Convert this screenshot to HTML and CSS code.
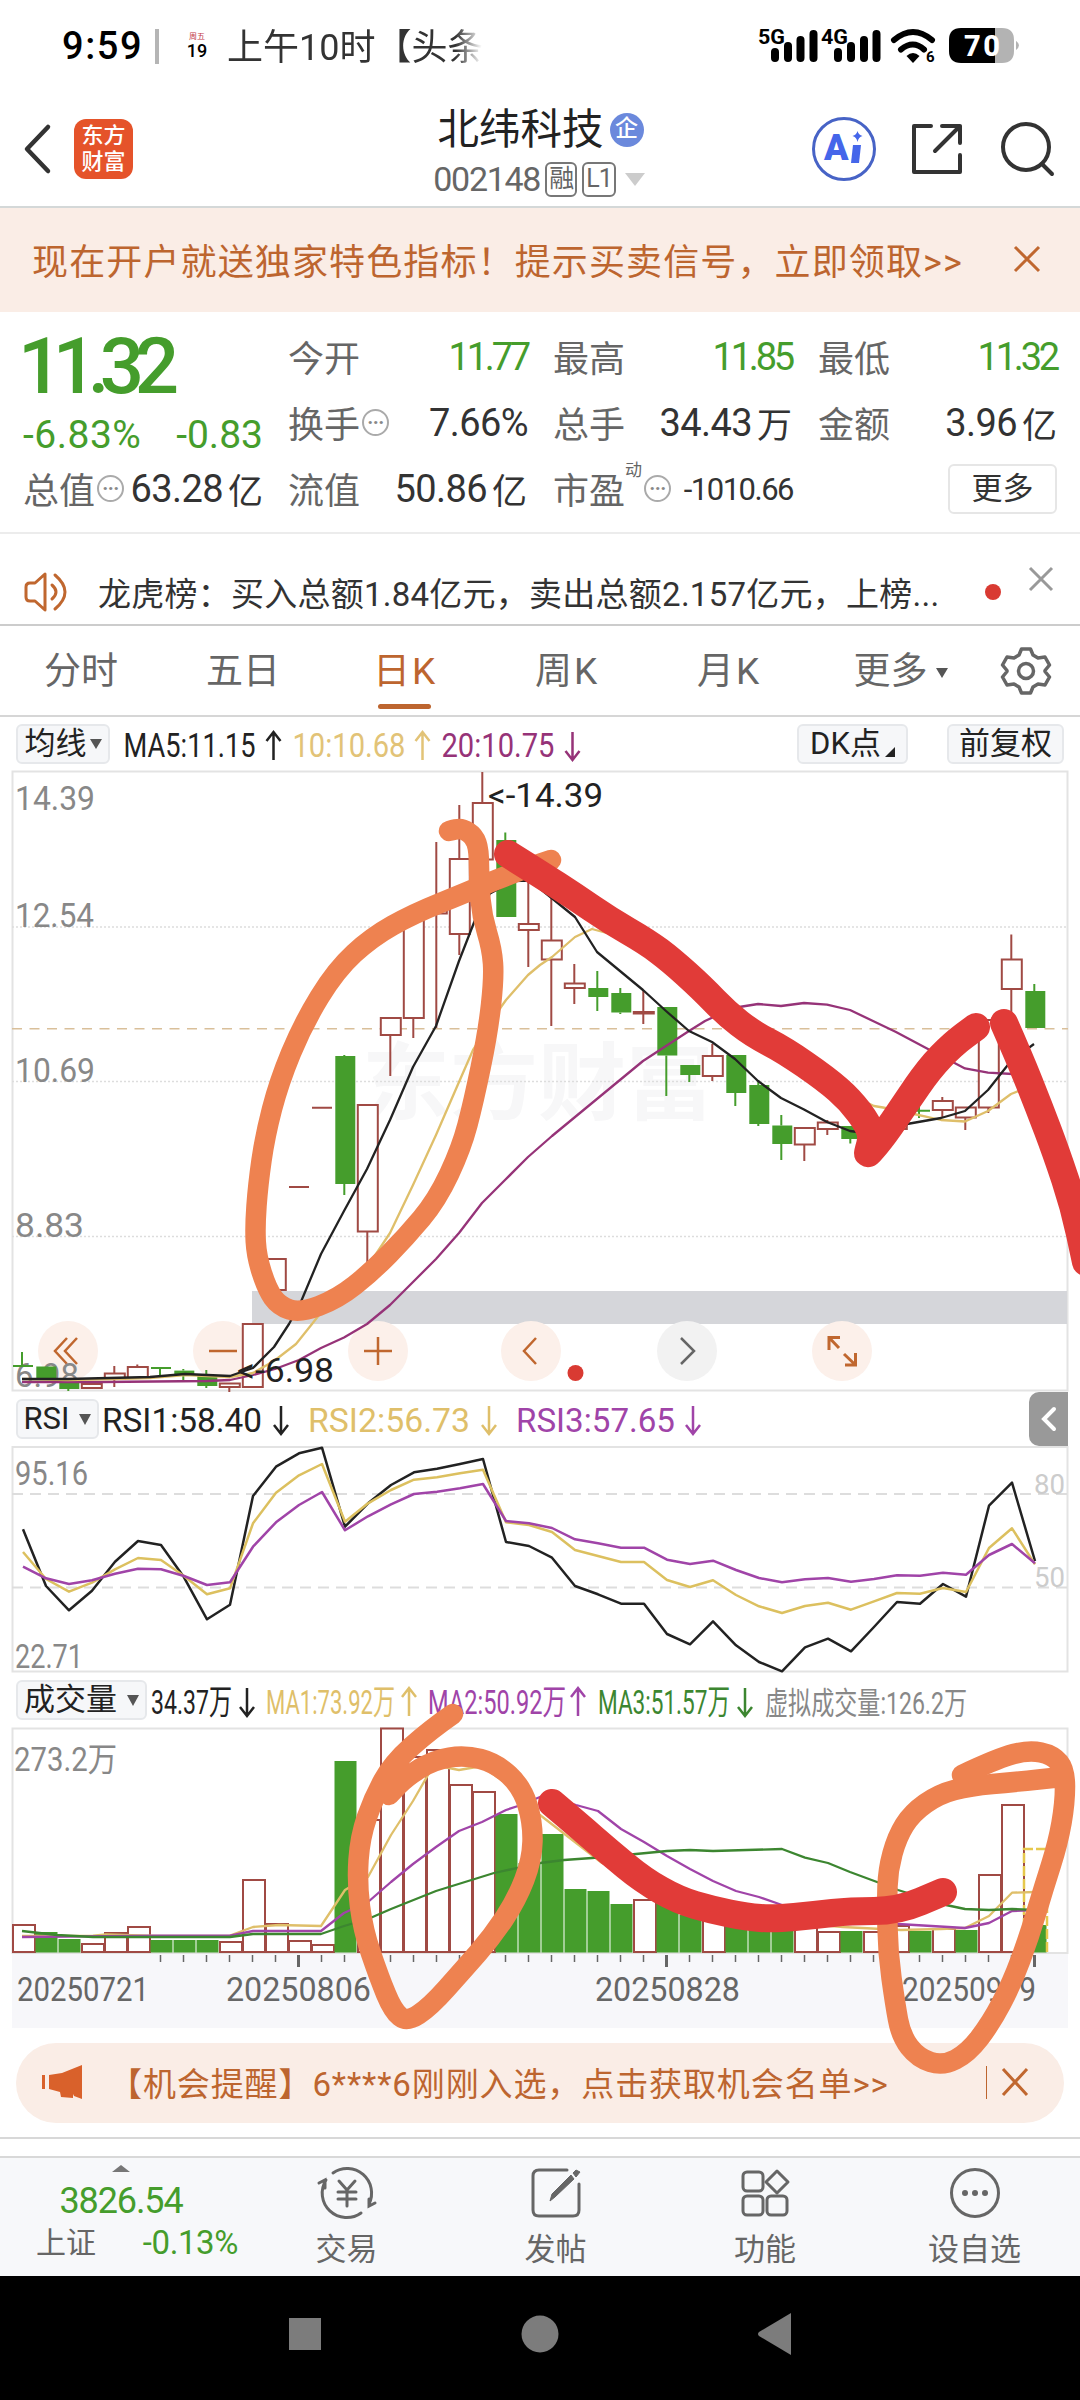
FILE: index.html
```html
<!DOCTYPE html>
<html lang="zh-CN">
<head>
<meta charset="utf-8">
<title>北纬科技 002148</title>
<link rel="stylesheet" href="styles.css">
</head>
<body>
<div class="screen">
  <header class="status">
    <div class="status-left">
      <span class="clock">9:59</span><i class="status-bar"></i>
      <span class="cal"><small>周五</small><b>19</b></span>
      <span class="status-note">上午10时【头条</span>
    </div>
    <svg class="status-icons" width="270" height="46" viewBox="750 24 270 46">
      <g font-family="Roboto" font-weight="700" font-size="21"><text x="758" y="44" textLength="27" lengthAdjust="spacingAndGlyphs">5G</text><text x="821" y="44" textLength="27" lengthAdjust="spacingAndGlyphs">4G</text></g>
      <path d="M775 52v6M788 46v12M800.500 40v18M813.500 34v24M838 52v6M851 46v12M864 40v18M876.500 34v24" stroke="#000" stroke-width="8" stroke-linecap="round"/>
      <path d="M894 40q19-16 38 0M901 49.500q12-10 23 0" fill="none" stroke="#000" stroke-width="6" stroke-linecap="round"/>
      <path d="M906.500 56q6.500-6 13 0l-6.500 7z"/>
      <text x="926" y="62" font-family="Roboto" font-weight="700" font-size="15">6</text>
      <path d="M961 28h34v35h-34q-12 0-12-12V40q0-12 12-12z"/>
      <path d="M995 28h7q12 0 12 12v11q0 12-12 12h-7zM1016 41q6 4 0 9z" fill="#b3b3b3"/>
      <text x="964" y="56" font-family="Roboto" font-weight="800" font-size="29" fill="#fff" textLength="36">70</text>
    </svg>
  </header>

  <nav class="topbar">
    <div class="top-left">
      <svg width="30" height="50" viewBox="0 0 30 50"><path d="M25 3L4 25l21 22" class="ink w5"/></svg>
      <div class="logo"><span>东方</span><span>财富</span></div>
    </div>
    <div class="title">
      <h1>北纬科技<em>企</em></h1>
      <p>002148<span class="tag">融</span><span class="tag">L1</span><i class="tri"></i></p>
    </div>
    <div class="top-right">
      <svg width="66" height="66" viewBox="0 0 66 66"><circle cx="33" cy="33" r="30.500" fill="none" stroke="#4763c6" stroke-width="3"/><text x="13" y="44" class="ai">A</text><path d="M42 29h8l-2 18h-8z" fill="#4566ea"/><path d="M46.500 15q1 4 5 5-4 1-5 6-1-5-5-6 4-1 5-5z" fill="#4566ea"/></svg>
      <svg width="54" height="54" viewBox="0 0 54 54"><path d="M21 4H4v46h46V33M32 4h18v17M50 4L25 29" class="ink w4"/></svg>
      <svg width="54" height="54" viewBox="0 0 54 54"><circle cx="26" cy="25" r="23" class="ink w4"/><path d="M42 42l10 10" class="ink w4"/></svg>
    </div>
  </nav>

  <section class="banner"><span>现在开户就送独家特色指标！提示买卖信号，立即领取&gt;&gt;</span>
    <svg width="28" height="28" viewBox="0 0 28 28"><path d="M2 2l24 24M26 2L2 26" class="cross"/></svg>
  </section>

  <section class="quote">
    <div class="price"><strong>11.32</strong><p><span>-6.83%</span><span>-0.83</span></p></div>
    <div class="cell"><label>今开</label><b class="g">11.77</b></div>
    <div class="cell"><label>最高</label><b class="g">11.85</b></div>
    <div class="cell"><label>最低</label><b class="g">11.32</b></div>
    <div class="cell"><label>换手<i class="info">···</i></label><b>7.66%</b></div>
    <div class="cell"><label>总手</label><b>34.43<u>万</u></b></div>
    <div class="cell"><label>金额</label><b>3.96<u>亿</u></b></div>
    <div class="cell"><label>总值<i class="info">···</i></label><b>63.28<u>亿</u></b></div>
    <div class="cell"><label>流值</label><b>50.86<u>亿</u></b></div>
    <div class="cell"><label>市盈<sup>动</sup><i class="info">···</i></label><b class="small">-1010.66</b></div>
    <div class="cell end"><button class="more">更多</button></div>
  </section>

  <section class="news">
    <svg width="48" height="40" viewBox="0 0 48 40"><path d="M21 2v36L11 29H6q-4 0-4-4V15q0-4 4-4h5zM28 13q8 7 0 14M31 3q20 17 0 34" fill="none" stroke="#c0672f" stroke-width="3" stroke-linejoin="round" stroke-linecap="round"/></svg>
    <span class="news-text">龙虎榜：买入总额1.84亿元，卖出总额2.157亿元，上榜...</span>
    <i class="dot"></i>
    <svg class="news-close" width="26" height="26" viewBox="0 0 26 26"><path d="M2 2l22 22M24 2L2 24" stroke="#999" stroke-width="3"/></svg>
  </section>

  <nav class="tabs">
    <a>分时</a><a>五日</a><a class="on k">日K</a><a class="k">周K</a><a class="k">月K</a><a>更多<i class="tri dark"></i></a>
    <svg width="50" height="50" viewBox="-25 -25 50 50"><path d="M-4.500-22h9l2.500 6 5 3 7-1 4.500 8-4.500 5.500v1l4.500 5.500-4.500 8-7-1-5 3-2.500 6h-9l-2.500-6-5-3-7 1-4.500-8 4.500-5.500v-1l-4.500-5.500 4.500-8 7 1 5-3z" class="gear"/><circle r="7.500" class="gear"/></svg>
  </nav>

  <div class="legend ma">
    <button class="chip c1">均线<i class="tri dark"></i></button>
    <svg class="grow" height="54" viewBox="114 717 680 54" id="legend-ma"></svg>
    <button class="chip c2">DK点<i class="corner"></i></button>
    <button class="chip c3">前复权</button>
  </div>
  <svg class="panel" height="620" viewBox="0 771 1080 620" id="kline"></svg>

  <div class="legend rsi">
    <button class="chip c4">RSI<i class="tri dark"></i></button>
    <svg class="grow" height="56" viewBox="101 1391 900 56" id="legend-rsi"></svg>
    <span class="drawer"><svg width="20" height="30" viewBox="0 0 20 30"><path d="M15 5L5 15l10 10" fill="none" stroke="#fff" stroke-width="4" stroke-linecap="round"/></svg></span>
  </div>
  <svg class="panel" height="225" viewBox="0 1447 1080 225" id="rsi"></svg>

  <div class="legend vol">
    <button class="chip c5">成交量<i class="tri dark"></i></button>
    <svg class="grow" height="56" viewBox="149 1672 900 56" id="legend-vol"></svg>
  </div>
  <svg class="panel" height="300" viewBox="0 1728 1080 300" id="volume"></svg>

  <section class="promo">
    <svg width="42" height="36" viewBox="0 0 42 36"><path d="M1 11h3v14H1zM8 11l13-2L41 1v34l-8-3-1-2v4l-12-1-1-5-11-3z" fill="#d9612b"/></svg>
    <span>【机会提醒】6****6刚刚入选，点击获取机会名单&gt;&gt;</span>
    <i class="divider"></i>
    <svg width="28" height="30" viewBox="0 0 28 30"><path d="M2 2l24 26M26 2L2 28" class="cross"/></svg>
  </section>
  <div class="strip"></div>

  <nav class="bottom">
    <div class="index"><i class="tri up"></i><b>3826.54</b><p><span>上证</span><em>-0.13%</em></p></div>
    <a><svg width="56" height="52" viewBox="-28 -26 56 52"><path d="M-14-20A24.500 24.500 0 0 1 22 11M14 20A24.500 24.500 0 0 1-21-13M-28-10l6-3v8M28 10l-6 3v-7" class="line"/><path d="M-8-12L0-3l8-9M0-3v16M-9-1H9M-9 6H9" class="line"/></svg>交易</a>
    <a><svg width="56" height="52" viewBox="-28 -26 56 52"><path d="M11-23h-28q-6 0-6 6v34q0 6 6 6h34q6 0 6-6V-9" class="line"/><path d="M-6 8l2-7L15-18l3 4L-1 4zM17-20l3-3 4 2-4 5z" fill="#666" stroke="#666"/></svg>发帖</a>
    <a><svg width="56" height="52" viewBox="-28 -26 56 52"><rect x="-22" y="-21" width="20" height="19" rx="4" class="line"/><rect x="-22" y="3" width="20" height="19" rx="4" class="line"/><rect x="2" y="3" width="20" height="19" rx="4" class="line"/><path d="M12-22l11 11L12 0 1-11z" class="line" stroke-linejoin="round"/></svg>功能</a>
    <a><svg width="56" height="52" viewBox="-28 -26 56 52"><circle r="23.500" class="line"/><g fill="#666"><circle cx="-10" r="3"/><circle r="3"/><circle cx="10" r="3"/></g></svg>设自选</a>
  </nav>
  <footer class="sysnav">
    <svg width="32" height="32"><rect width="32" height="32" fill="#7c7c7c"/></svg>
    <svg width="38" height="38"><circle cx="19" cy="19" r="18.500" fill="#7c7c7c"/></svg>
    <svg width="34" height="42"><path d="M34 0v42L2 23q-2-2 0-4z" fill="#7c7c7c"/></svg>
  </footer>

  <svg class="marks" width="1080" height="2400" viewBox="0 0 1080 2400">
    <g class="orange" id="orange"></g>
    <g class="red" id="red"></g>
  </svg>
</div>
<script src="chart.js"></script>
</body>
</html>
```
FILE: styles.css
```css
* { box-sizing: border-box; }
body { margin: 0; background: #fff; }
.screen { position: relative; width: 1080px; height: 2400px; overflow: hidden; background: #fff; color: #333;
  font-family: Roboto, "Noto Sans CJK SC", sans-serif; text-spacing-trim: space-all; display: flex; flex-direction: column; }
.screen > * { flex: none; }
.screen svg { display: block; overflow: visible; }
i, em { font-style: normal; }
button { font: inherit; color: inherit; padding: 0; margin: 0; }

.status { height: 95px; display: flex; justify-content: space-between; padding: 0 60px 0 62px; color: #000; }
.status-left { display: flex; align-items: center; height: 92px; }
.clock { font-size: 38px; font-weight: 500; letter-spacing: 1.6px; width: 93px; }
.status-bar { width: 4px; height: 35px; background: #b5b5b5; margin-right: 27px; }
.cal { display: flex; flex-direction: column; align-items: center; width: 22px; line-height: 1; }
.cal small { font-size: 8px; color: #c23a4a; }
.cal b { font-size: 18px; font-weight: 500; margin-top: 1px; }
.status-note { width: 260px; margin: -4px 0 0 19px; font-size: 36px; font-weight: 400; letter-spacing: 0; white-space: nowrap; overflow: hidden; color: #333;
  -webkit-mask-image: linear-gradient(90deg, #000 88%, transparent 98%); mask-image: linear-gradient(90deg, #000 88%, transparent 98%); }
.status-icons { margin-top: 24px; }

.topbar { height: 113px; border-bottom: 2px solid #d4d8d8; display: grid; grid-template-columns: 1fr 260px 1fr; }
.top-left { display: flex; align-items: center; gap: 21px; padding-left: 23px; margin-top: -4px; }
.logo { width: 59px; height: 60px; border-radius: 12px; background: #e5532a; color: #fff; font-size: 22px; font-weight: 500; line-height: 26px;
  display: flex; flex-direction: column; align-items: center; justify-content: center; }
.title { text-align: center; }
.title h1 { margin: 9px 0 0 1px; font-size: 41.500px; font-weight: 400; line-height: 52px; color: #222; display: flex; align-items: center; justify-content: center; gap: 6px; white-space: nowrap; }
.title em { width: 34px; height: 34px; border-radius: 50%; background: #6b89dc; color: #fff; font-size: 23px; line-height: 32px; font-weight: 500; }
.title p { margin: 3px 0 0 -2px; display: flex; align-items: center; justify-content: center; font-size: 34px; line-height: 40px; color: #666; letter-spacing: -1.300px; }
.tag { height: 35px; min-width: 31px; border: 2px solid #777; border-radius: 6px; font-size: 25px; line-height: 30px; margin-left: 5px; padding: 0 2px; letter-spacing: -1px; }
.tri { display: inline-block; border: 10px solid transparent; border-top: 13px solid #ccc; border-bottom: 0; margin-left: 9px; }
.top-right { display: flex; align-items: center; justify-content: flex-end; gap: 31px; padding-right: 26px; margin-top: -4px; }
.top-right svg:first-child { margin-right: 2px; }
.top-right svg:last-child { margin-left: 5px; }
.ink { fill: none; stroke: #333; stroke-linejoin: round; stroke-linecap: round; }
.w4 { stroke-width: 4; } .w5 { stroke-width: 4.500px; }
.ai { font: 900 36px Roboto; fill: #4566ea; }

.banner { height: 104px; background: #faede6; color: #bd652f; font-size: 36px; letter-spacing: 1.130px; display: flex; align-items: center; justify-content: space-between; padding: 0 39px 2px 32px; white-space: nowrap; }
.cross { stroke: #c0672f; stroke-width: 3; }

.quote { height: 222px; border-bottom: 2px solid #ececec; padding: 12px 23px 0 23px; display: grid;
  grid-template-columns: 240px 240px 240px 239px; column-gap: 25px; grid-template-rows: 66px 66px 66px; }
.price { grid-row: span 2; color: #459d2c; }
.price strong { display: block; font-size: 78px; font-weight: 500; line-height: 86px; height: 88px; letter-spacing: -9.500px; margin-left: -5px; }
.price p { display: flex; justify-content: space-between; margin: 0; font-size: 39px; line-height: 46px; letter-spacing: .5px; }
.price p span:last-child { letter-spacing: 0; }
.cell { display: flex; align-items: center; justify-content: space-between; white-space: nowrap; }
.cell:nth-child(3), .cell:nth-child(6), .cell:nth-child(9) { padding-right: 1px; }
.cell.end { justify-content: flex-end; }
.cell label { font-size: 36px; color: #666; display: flex; align-items: center; margin-top: -2px; }
.cell b { font-weight: 400; font-size: 38px; letter-spacing: -.600px; display: flex; align-items: center; }
.cell b u { text-decoration: none; font-size: 35px; margin: -2px 0 0 5px; letter-spacing: 0; }
.cell .g { color: #459d2c; letter-spacing: -3.200px; }
.cell .small { font-size: 31px; letter-spacing: -1.500px; }
.info { width: 27px; height: 27px; border: 2px solid #aaa; border-radius: 50%; font-size: 20px; font-weight: 700; line-height: 22px; letter-spacing: -.5px; text-align: center; color: #888; margin-left: 2px; }
.cell sup { font-size: 17px; align-self: flex-start; line-height: 1; margin-top: 0; }
.more { width: 109px; height: 50px; border: 2px solid #e6e6e6; border-radius: 6px; background: #fff; font-size: 31px; line-height: 44px; }

.news { height: 92px; border-bottom: 2px solid #ccc; display: flex; align-items: center; padding: 26px 26px 0 24px; }
.news-text { margin-left: 26px; width: 881px; font-size: 33px; letter-spacing: .250px; white-space: nowrap; }
.dot { width: 16px; height: 16px; border-radius: 50%; background: #d93a32; margin-left: 6px; }
.news-close { margin: -26px 0 0 27px; }

.tabs { height: 91px; border-bottom: 2px solid #d6d6d6; display: flex; color: #666; font-size: 37px; line-height: 92px; }
.tabs a { width: 162px; text-align: center; white-space: nowrap; position: relative; }
.tabs .k { letter-spacing: 2px; }
.tabs a:nth-child(6) { width: 169px; padding-left: 12px; }
.tabs .on { color: #bd652f; }
.tabs .on::after { content: ""; position: absolute; left: 54px; top: 78px; width: 53px; height: 5px; border-radius: 3px; background: #bd652f; }
.tabs > svg { margin: 20px 0 0 22px; }
.tri.dark { border: 6px solid transparent; border-top: 10px solid #555; border-bottom: 0; margin-left: 8px; vertical-align: 6px; }
.gear { fill: none; stroke: #666; stroke-width: 3.500px; stroke-linejoin: round; }

.legend { display: flex; align-items: center; }
.chip { height: 40px; border: 2px solid #e6e8eb; border-radius: 6px; background: #f6f7f9; color: #222; font-size: 31px; line-height: 34px; white-space: nowrap; display: flex; align-items: center; justify-content: center; flex: none; }
.chip .tri { border-width: 10px 6px 0; margin-left: 3px; }
.ma { height: 54px; padding: 0 16px; }
.c1 { width: 94px; margin-right: 4px; }
.c2 { width: 111px; margin-right: 39px; }
.c3 { width: 117px; }
.ma .grow { width: 683px; }
.grow { flex: none; }
.corner { border: 5px solid #222; border-top-color: transparent; border-left-color: transparent; align-self: flex-end; margin: 0 0 5px 4px; }
.rsi { height: 56px; padding: 0 12px 0 16px; }
.rsi .grow { width: 900px; margin-right: 28px; }
.c4 { width: 83px; margin-right: 2px; }
.rsi .tri, .vol .tri { border-width: 11px 6px 0; margin-left: 10px; }
.drawer { width: 39px; height: 54px; background: #999; border-radius: 10px 0 0 10px; display: grid; place-items: center; flex: none; }
.vol { height: 56px; padding: 0 16px; }
.c5 { width: 131px; margin-right: 2px; }
.vol .grow { width: 900px; }
.panel { width: 1080px; }

.promo { height: 80px; margin: 15px 16px 14px; border-radius: 40px; background: #faede6; color: #bd652f; display: flex; align-items: center; padding: 0 35px 2px 25px; font-size: 33px; letter-spacing: .9px; white-space: nowrap; }
.promo span { margin-left: 26px; flex: 1; }
.divider { width: 1px; height: 33px; background: #bd652f; margin-right: 14px; }
.strip { height: 21px; border-top: 2px solid #d8d8d8; border-bottom: 2px solid #d8d8d8; }

.bottom { height: 118px; background: #f7f8fa; display: grid; grid-template-columns: 242px 209px 209px 210px 209px; color: #666; font-size: 31px; }
.bottom a { display: flex; flex-direction: column; align-items: center; padding-top: 9px; line-height: 64px; white-space: nowrap; }
.bottom a svg { margin-bottom: -1px; }
.line { fill: none; stroke: #666; stroke-width: 3; stroke-linecap: round; }
.index { display: flex; flex-direction: column; align-items: center; }
.tri.up { border: 9px solid transparent; border-bottom: 7px solid #777; border-top: 0; margin: 7px 0 0; }
.index b { font-size: 36px; font-weight: 400; line-height: 44px; color: #459d2c; letter-spacing: -1.100px; margin-top: 7px; }
.index p { margin: 0 0 0 32px; display: flex; justify-content: space-between; width: 202px; line-height: 40px; font-size: 30px; }
.index em { font-size: 33px; color: #459d2c; letter-spacing: -.400px; }
.sysnav { height: 124px; background: #000; display: flex; align-items: center; justify-content: center; gap: 200px; padding: 0 0 8px 0; }
.sysnav svg:last-child { margin-left: -2px; }

.marks { position: absolute; left: 0; top: 0; pointer-events: none; }
.orange { fill: none; stroke: #ee8250; stroke-width: 20.500px; stroke-linecap: round; stroke-linejoin: round; }
.red { fill: none; stroke: #e13b38; stroke-width: 28px; stroke-linecap: round; stroke-linejoin: round; }
text { font-family: Roboto, "Noto Sans CJK SC", sans-serif; }
```
FILE: chart.js
```js
const RED = '#a04a44', GREEN = '#459d2c', BLACK = '#222', GOLD = '#dfbf6a', PURPLE = '#963378', VIOLET = '#a044a8', DGREEN = '#3c8630';
const put = (id, html) => { document.getElementById(id).innerHTML = html; };
const text = (x, y, w, s, size, fill, extra = '') =>
  `<text x="${x}" y="${y}" font-size="${size}" fill="${fill}" textLength="${w}" lengthAdjust="spacingAndGlyphs" ${extra}>${s.replace(/</g, '&lt;')}</text>`;
const line = (pts, color, w = 2.3) => `<polyline points="${pts}" fill="none" stroke="${color}" stroke-width="${w}" stroke-linejoin="round"/>`;
const arrow = (x, y, up, color) => {
  const t = y - 14, b = y + 14;
  return `<path d="M${x} ${t}V${b}M${x - 7} ${up ? t + 9 : b - 9}L${x} ${up ? t : b}L${x + 7} ${up ? t + 9 : b - 9}" fill="none" stroke="${color}" stroke-width="2.5"/>`;
};
const frame = (y, h) => `<rect x="12.5" y="${y}" width="1055" height="${h}" fill="none" stroke="#e3e3e3" stroke-width="2"/>`;

/* legends */
put('legend-ma', text(122, 757, 132, 'MA5:11.15', 33, BLACK) + arrow(272, 746, 1, BLACK) +
  text(291, 757, 113, '10:10.68', 33, '#e2c377') + arrow(421, 746, 1, '#e2c377') +
  text(440, 757, 113, '20:10.75', 33, PURPLE) + arrow(571, 746, 0, PURPLE));
put('legend-rsi', text(102, 1431.5, 160, 'RSI1:58.40', 34, BLACK) + arrow(281, 1420, 0, BLACK) +
  text(308, 1431.5, 162, 'RSI2:56.73', 34, GOLD) + arrow(489, 1420, 0, GOLD) +
  text(516, 1431.5, 159, 'RSI3:57.65', 34, VIOLET) + arrow(693, 1420, 0, VIOLET));
put('legend-vol', text(151, 1713.5, 81, '34.37万', 34, BLACK) + arrow(247, 1702, 0, BLACK) +
  text(266, 1713.5, 129, 'MA1:73.92万', 34, GOLD) + arrow(409, 1702, 1, GOLD) +
  text(428, 1713.5, 138, 'MA2:50.92万', 34, VIOLET) + arrow(578, 1702, 1, VIOLET) +
  text(598, 1713.5, 132, 'MA3:51.57万', 34, DGREEN) + arrow(745, 1702, 0, DGREEN) +
  text(765, 1713.5, 202, '虚拟成交量:126.2万', 31, '#888'));

/* candles: [index, colour, body top, body bottom, high, low] */
const candles = [
  [1,'g',1366.5,1378],[2,'g',1382,1389,1382,1391],[3,'r',1384,1388],[4,'r',1373.5,1379,1366,1387],[5,'r',1367,1378,1364.5,1378],
  [7,'g',1370.6,1376,1369,1381],[8,'g',1375,1386,1370,1388],[9,'r',1383.5,1387,1383,1392],[10,'r',1324,1387],[11,'r',1259,1290],
  [14,'g',1056,1184,1055,1195],[15,'r',1105,1231.5,1105,1263],[16,'r',1018,1035,1018,1076],[17,'r',918,1018,918,1038],
  [18,'r',905,913.5,842,1028],[19,'r',859,934,805,955],[20,'r',803,859.5,772,860],[21,'g',840,917,832.5,917],[22,'r',924,930,880,967],
  [23,'r',940.5,959.5,890,1026],[24,'r',983.5,988,964,1004],[25,'g',988,997,971,1011],[26,'g',993,1012.5,988,1014],[27,'r',1012,1013.5,990,1024],
  [28,'g',1007,1055.5,1007,1096],[29,'g',1065,1075,1065,1082],[30,'r',1056,1076,1044,1081],[31,'g',1055,1093,1055,1106],
  [32,'g',1085,1124,1080,1126],[33,'g',1125.5,1144,1115,1160],[34,'r',1128,1144.5,1128,1161],[35,'r',1122.5,1129,1120,1135],
  [36,'g',1126,1139,1126,1143.5],[38,'r',1123,1129,1120,1138],[40,'r',1101,1110,1097,1117],[41,'r',1107.5,1117.5,1107,1130],
  [42,'r',1020,1107.5,1020,1113],[43,'r',959.5,989,934.5,1024],[44,'g',991,1028,984,1028]];
let k = frame(771.5, 619);
k += text(362, 1113, 352, '东方财富', 84, '#f7f7f8', 'font-weight="700"');
for (const y of [927, 1081.5, 1236.5]) k += `<path d="M12 ${y}H1068" stroke="#ddd" stroke-width="1.5" stroke-dasharray="2 2"/>`;
k += '<path d="M12 1028.700H1068" stroke="#d9bf9a" stroke-width="1.500" stroke-dasharray="10 7.500"/>';
k += '<path d="M252 1291H1067V1324H252z" fill="#d5d6da"/>';
[68, 223, 378, 531, 687, 842].forEach((x, n) => { k += `<circle cx="${x}" cy="1351" r="30" fill="${n === 4 ? '#f2f2f2' : '#fcf0ea'}"/>`; });
k += '<g fill="none" stroke="#c0672f" stroke-width="2.500"><path d="M67 1338L55 1351L67 1364M77 1338L65 1351L77 1364M209 1351H237M364 1351H392M378 1337V1365M536 1338L524 1351L536 1364"/>' +
  '<path stroke="#666" d="M681 1338L694 1351L681 1364"/><path stroke-width="3" d="M840 1337.500H829V1350M829 1337.500L839 1348M845 1365H855.500V1353M855.500 1365L844 1354"/></g>';
k += '<circle cx="575.500" cy="1373" r="8" fill="#d93a32"/>';
[['14.39', 79, 809.5], ['12.54', 78, 927], ['10.69', 79, 1081.5], ['8.83', 68, 1236.5], ['6.98', 63, 1387]].forEach(([s, w, y]) => { k += text(15, y, w + 1, s, 33, '#888'); });
for (const [i, c, top, bot, hi = top, lo = bot] of candles) {
  const x = 22.3 + 23 * i, col = c === 'g' ? GREEN : RED;
  k += `<path d="M${x} ${hi}V${top}M${x} ${bot}V${lo}" stroke="${col}" stroke-width="2"/>` + (c === 'g'
    ? `<rect x="${x - 9}" y="${top}" width="20" height="${bot - top}" fill="${GREEN}"/>`
    : `<rect x="${x - 9.5}" y="${top}" width="20" height="${bot - top}" fill="#fff" stroke="${RED}" stroke-width="2"/>`);
}
k += `<path d="M289 1187H309M312 1107.700H332" stroke="${RED}" stroke-width="2"/>`;
k += `<path d="M22 1352V1367M13 1366H33M160 1368V1376M151 1368H171M919 1104V1118M908 1110.700H930" stroke="${GREEN}" stroke-width="2"/>`;
k += line('22,1382 101,1382 207,1381 230,1380 253,1375 275,1369 299,1360 321,1348 344,1337.500 367,1324 390,1305 413,1282 436,1259 459,1233 482,1203 505,1180 528,1157 552,1136 643,1061 689,1031 705,1021 733,1008 758,1004 781,1006 804,1003 827,1004.600 850,1010 873,1021 896,1032 927,1048.500 965,1068.400 988,1072.600 1013,1074', PURPLE);
k += line('22,1379 68,1380 115,1379 150,1378 185,1375 230,1377 253,1373 274,1361 296,1344 312,1324 330,1301 372,1260 390,1233 413,1185 436,1135 459,1082 473,1050 501,1007 506,1000 528,975 540,965 552,957 575,937 592,929 640,942 700,995 760,1040 820,1077 857,1098 874,1106 883,1107.500 914,1114 941,1120 965,1121.500 988,1111 1011,1094 1034,1085', GOLD);
k += line('22,1379 68,1379 150,1377 185,1374 230,1376 253,1368 274,1347 289,1324 300,1304 321,1254 344,1211 367,1169 390,1120 413,1067 436,1026 459,961 475,920 490,893.500 513,881 530,880.500 575,917 597,952 620,971 643,990 666,1011 689,1031 712,1042 735,1059 758,1081 781,1098 804,1109.500 827,1122 850,1131 873,1134 907,1124 941,1118 965,1111 988,1090 1011,1061 1034,1044', BLACK);
k += text(488, 807, 115, '<-14.39', 33, BLACK) + text(237, 1382, 97, '<-6.98', 33, BLACK);
put('kline', k);

/* RSI curves, plotted at y = 1380 + v / 3 */
const series = v => v.map((n, i) => `${23 + 23 * i},${(1380 + n / 3).toFixed(1)}`).join(' ');
let r = frame(1447, 224.5);
r += '<path d="M12 1494H1068M12 1587.500H1068" stroke="#ddd" stroke-width="2" stroke-dasharray="11 7"/>';
r += text(15, 1484.5, 73, '95.16', 33, '#888') + text(15, 1667.5, 68, '22.71', 33, '#888') + text(1034, 1493.5, 31, '80', 28, '#ccc') + text(1034, 1587, 31, '50', 28, '#ccc');
r += line(series([448,618,691,632,545,483,495,592,718,674,348,260,220,203,440,370,315,277,266,252,237,486,498,533,618,643,671,671,762,793,724,796,846,874,802,776,814,741,666,671,612,650,377,308,543]), BLACK, 2.5);
r += line(series([516,597,635,608,568,534,540,588,643,625,430,338,286,252,425,370,330,299,292,280,269,427,435,456,510,528,546,546,600,621,601,645,679,699,678,668,689,664,639,641,624,636,504,445,553]), '#dcc05f', 2.5);
r += line(series([560,595,612,601,581,566,568,588,615,607,500,427,375,336,451,409,373,342,335,325,312,423,430,444,478,490,503,503,539,552,542,570,594,607,598,594,605,597,586,587,578,584,525,492,550]), VIOLET, 2.5);
put('rsi', r);

/* volume bars: top edges */
const bars = 'r1925 g1932 g1939 r1944 r1933 r1927 g1940 g1940 g1940 r1942 r1880 r1924 r1941 r1945 g1761 r1820 r1728.5 r1757 r1750 r1785 r1792 g1814 g1863 g1834 g1889 g1891 g1904 r1900 g1903 g1915 r1917 g1920 g1928 g1931 r1928 r1932 g1931 r1932 r1926 g1931 r1929 g1930 r1875 r1805 g1925'.split(' ');
let v = '<path d="M12 1953H1068V2028H12z" fill="#f7f7fa"/>' + frame(1728.5, 224.5);
v += text(14, 1770.5, 103, '273.2万', 33, '#888');
bars.forEach((b, i) => {
  const x = 12.5 + 23 * i, y = +b.slice(1);
  v += b[0] === 'g' ? `<rect x="${x}" y="${y}" width="22" height="${1952.5 - y}" fill="${GREEN}"/>`
    : `<rect x="${x + .5}" y="${y}" width="22" height="${1952 - y}" fill="#fff" stroke="${RED}" stroke-width="2"/>`;
});
v += '<path d="M1047 1952V1849H1024V1952" fill="none" stroke="#e6c84c" stroke-width="2.500" stroke-dasharray="10 3"/>';
v += line('22,1936 93,1935.700 106,1934.500 158,1936 230,1935.700 253,1927 279,1925 321,1926 345,1890 350,1887 368,1877 391,1835 413,1801 432,1768 444,1767 459,1770 482,1766 511,1787 540,1815 602,1863 680,1900 760,1920 843,1927 901,1930 941,1929 965,1928 989,1916 1012,1892.700 1035,1892', GOLD);
v += line('22,1937 158,1935.700 230,1935.700 253,1931 321,1931 344,1913 368,1902 391,1882 413,1864 436,1847 459,1831 482,1822 506,1810 518,1806 540,1797 560,1800 576,1805 598,1811 621,1829 644,1842 667,1856 690,1869 713,1881 736,1891 759,1897 782,1905 815,1914 898,1924 965,1928 989,1923 1012,1911 1035,1910', VIOLET);
v += line('22,1931 57,1935 93,1937 230,1937 253,1934 321,1934 344,1926 368,1919 391,1909 436,1891 494,1873 540,1863 564,1860 592,1858 636,1854 667,1851 690,1850 713,1851 782,1849 805,1857.700 828,1863 850,1872 877,1882 898,1890 946,1905 965,1909 989,1910 1012,1909 1035,1910', DGREEN);
for (let i = 6; i <= 44; i++) {
  const x = 22.5 + 23 * i, big = i === 12 || i === 28 || i === 44;
  v += `<path d="M${x} 1955V${big ? 1967 : 1962}" stroke="#666" stroke-width="${big ? 3 : 1.5}"/>`;
}
[['20250721', 17, 132], ['20250806', 226, 145], ['20250828', 595, 145], ['20250919', 902, 134]].forEach(([s, x, w]) => { v += text(x, 2000.5, w, s, 33, '#666'); });
put('volume', v);

/* freehand strokes, smoothed through their midpoints */
const stroke = s => {
  const p = s.split(' ').map(q => q.split(',').map(Number));
  let d = `M${p[0]}`;
  for (let i = 1; i < p.length - 1; i++) d += `Q${p[i]} ${(p[i][0] + p[i + 1][0]) / 2},${(p[i][1] + p[i + 1][1]) / 2}`;
  return `<path d="${d}L${p[p.length - 1]}"/>`;
};
put('orange', [
  '449,831 456,829 463,829 474,836 479,850 479,883 482,916 492,949 494,978 488,1032 473.500,1102 461.400,1148 437,1200 406,1237 372,1271.600 337.500,1299 300,1313 279,1306 267,1289 256.500,1256 255,1227 258,1185 265,1136 279,1082 303,1024 336,970 372,937 413,914 465,893 499,878.500 530,867 551,860',
  '453,1714 430,1730 393,1763 374,1797 360,1837 357,1883 363,1930 379,1977 393,2011 407,2022 430,2007 463,1970 492,1937 516.500,1900 532,1860 533,1823 522,1787 496,1763 465,1755 434,1760 406,1777 389,1795',
  '962,1775 998,1758 1029,1750 1053,1755 1065,1770 1065,1803 1058,1843 1044,1887 1029,1937 1012,1983 991,2023 968,2053 943,2066 918,2058 901,2036 895,2003 888,1953 887,1903 888,1870 897,1837 912,1813 939,1794 970,1786 1015,1782 1062,1777'].map(stroke).join(''));
put('red', [
  '508,854 540,874 574,896 609,920 647,942 671,960 702,988 726,1013 753,1034 784,1050 826,1079 850,1100 868,1124 872,1138 868,1152 868,1154 884,1135 905,1104 929,1069 953,1044 976,1027',
  '1004,1023 1019,1057 1039,1107 1056,1152 1074,1206 1086,1262',
  '552,1803 578,1825 609,1852 643,1880 678,1900 712,1910 747,1917 774,1919 815,1915 850,1911 898,1911 943,1892'].map(stroke).join(''));
```
